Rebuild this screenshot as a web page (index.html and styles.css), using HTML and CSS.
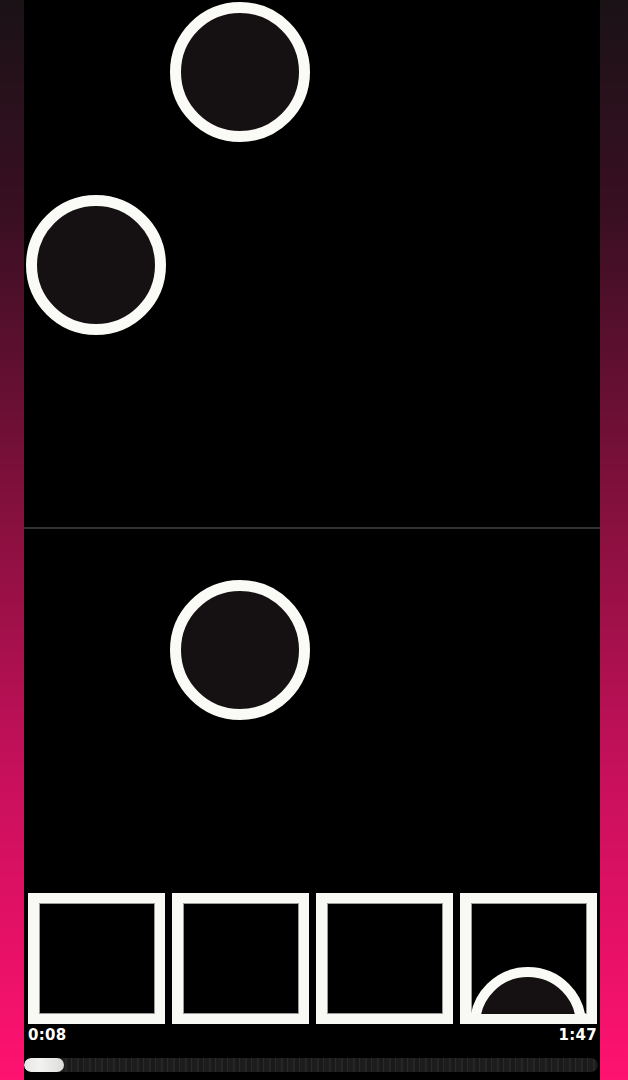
FILE: index.html
```html
<!DOCTYPE html>
<html lang="en">
<head>
<meta charset="utf-8">
<title>Video player</title>
<link rel="stylesheet" href="styles.css">
</head>
<body>
<main class="player">
  <section class="pane pane-top">
    <div class="ball ball-a"></div>
    <div class="ball ball-b"></div>
  </section>
  <div class="divider"></div>
  <section class="pane pane-bottom">
    <div class="ball ball-c"></div>
  </section>
  <div class="thumbs">
    <div class="thumb"></div>
    <div class="thumb"></div>
    <div class="thumb"></div>
    <div class="thumb"><div class="mini-ball"></div></div>
  </div>
  <div class="times">
    <span class="time">0:08</span>
    <span class="time">1:47</span>
  </div>
  <div class="progress">
    <div class="progress-fill"></div>
  </div>
</main>
</body>
</html>
```
FILE: styles.css
```css
* { box-sizing: border-box; }
html, body { margin: 0; padding: 0; }
body {
  width: 628px;
  height: 1080px;
  overflow: hidden;
  background: linear-gradient(to bottom, #1a1216 0%, #3a0f22 20%, #8c1040 50%, #c8105c 72%, #ff1270 100%);
  font-family: "DejaVu Sans", "Liberation Sans", sans-serif;
}
.player {
  margin-left: 24px;
  width: 576px;
  height: 1080px;
  background: #000;
  display: flex;
  flex-direction: column;
}
.pane {
  position: relative;
  overflow: hidden;
}
.pane-top { height: 527px; }
.divider { height: 2px; background: #333; }
.pane-bottom { height: 364px; }
.ball {
  position: absolute;
  width: 140px;
  height: 140px;
  border-radius: 50%;
  border: 11px solid #fafaf6;
  background: #151011;
}
.ball-a { left: 146px; top: 2px; }
.ball-b { left: 2px; top: 195px; }
.ball-c { left: 146px; top: 51px; }
.thumbs {
  display: grid;
  grid-template-columns: repeat(4, 1fr);
  gap: 7px;
  margin-left: 4px;
  width: 569px;
  height: 131px;
}
.thumb {
  position: relative;
  overflow: hidden;
  border: 10px solid #f8f8f4;
  border-left-width: 11px;
  background: #000;
  box-shadow: inset 0 0 0 1px #9a9a96;
}
.mini-ball {
  position: absolute;
  left: -1px;
  top: 64px;
  width: 116px;
  height: 116px;
  border-radius: 50%;
  border: 10px solid #fafaf6;
  background: #151011;
}
.times {
  display: flex;
  justify-content: space-between;
  margin-top: 3px;
  padding: 0 3px 0 4px;
  height: 16px;
}
.time {
  color: #fff;
  font-weight: 700;
  font-size: 15px;
  line-height: 16px;
  letter-spacing: 0.3px;
}
.progress {
  margin-top: 15px;
  width: 574px;
  height: 14px;
  border-radius: 7px;
  background: repeating-linear-gradient(to right, #1d1d1d 0 5px, #262626 5px 7px, #1a1a1a 7px 11px, #2a2a2a 11px 12px);
  overflow: hidden;
}
.progress-fill {
  width: 40px;
  height: 14px;
  border-radius: 7px;
  background: linear-gradient(to right, #e6e6e4, #f2f2f0 40%, #dcdcda);
}
```
